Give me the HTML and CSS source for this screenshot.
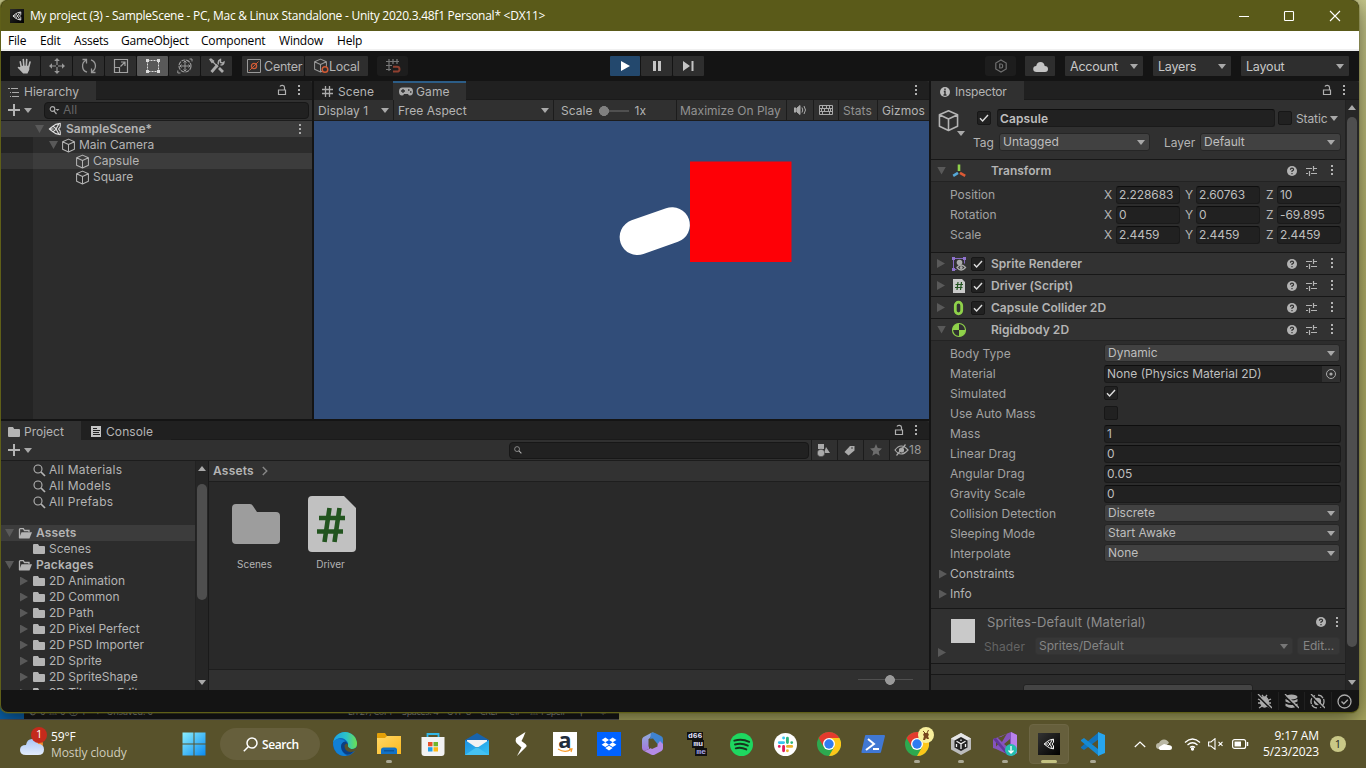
FILE: index.html
```html
<!DOCTYPE html>
<html lang="en">
<head>
<meta charset="utf-8">
<title>My project (3) - SampleScene</title>
<link rel="stylesheet" href="styles.css">
</head>
<body>
<svg class="defs" width="0" height="0" aria-hidden="true">
  <defs>
    <linearGradient id="gEdge" x1="0" y1="0" x2="1" y2="0"><stop offset="0" stop-color="#1ba0e4"/><stop offset=".55" stop-color="#2cc3c8"/><stop offset="1" stop-color="#6de04e"/></linearGradient>
    <linearGradient id="gWin" x1="0" y1="0" x2="1" y2="1"><stop offset="0" stop-color="#8bf0ff"/><stop offset="1" stop-color="#0a8af0"/></linearGradient>
    <linearGradient id="gFold" x1="0" y1="0" x2="1" y2="1"><stop offset="0" stop-color="#ffd867"/><stop offset="1" stop-color="#fdb91e"/></linearGradient>
    <linearGradient id="gCloud" x1="0" y1="0" x2="0" y2="1"><stop offset="0" stop-color="#a9c6f5"/><stop offset="1" stop-color="#e4edfc"/></linearGradient>
    <linearGradient id="gMail" x1="0" y1="0" x2="1" y2="1"><stop offset="0" stop-color="#1c90e0"/><stop offset="1" stop-color="#35c3f5"/></linearGradient>
    <linearGradient id="gM" x1="0" y1="0" x2="0" y2="1"><stop offset="0" stop-color="#8fb0dc"/><stop offset="1" stop-color="#a577dc"/></linearGradient>
    <symbol id="cube" viewBox="0 0 16 16"><path d="M8 1.2 14.3 4v8L8 15 1.7 12V4zM1.7 4 8 7l6.300-3M8 7v8" fill="none" stroke="currentColor" stroke-width="1.100" stroke-linejoin="round"/></symbol>
    <symbol id="unity" viewBox="0 0 16 16"><path d="M14 5.500V1.500L9 2.700 6 4.500 1.500 8 6 11.500l3 1.800 5 1.200v-4M6.500 8H2M9.500 7.500 12.500 2M9.500 8.500l3 5.500M14 5.500 12 8l2 2.500M6 5l3.500 3L6 11" fill="none" stroke="currentColor" stroke-width="1.300" stroke-linejoin="round"/></symbol>
    <symbol id="kebab" viewBox="0 0 4 11"><path d="M1 0h2v2H1zM1 4h2v2H1zM1 8h2v2H1z" fill="currentColor"/></symbol>
    <symbol id="lock" viewBox="0 0 10 12"><path d="M1.500 6h7v4.500h-7zM7.500 6V3.200C7.500.8 3.500.8 3 2.500" fill="none" stroke="currentColor" stroke-width="1.200"/></symbol>
    <symbol id="check" viewBox="0 0 10 10"><path d="M1 5.300 3.600 8 9 2" fill="none" stroke="#dedede" stroke-width="1.400"/></symbol>
    <symbol id="folder" viewBox="0 0 12 10"><path d="M0 1Q0 0 1 0h4l1.200 2H11q1 0 1 1v6q0 1-1 1H1Q0 10 0 9z" fill="currentColor"/></symbol>
    <symbol id="ofolder" viewBox="0 0 14 11"><path d="M1.500 10V1.500q0-.8.8-.8h3L6.500 2.500H11V4" fill="none" stroke="currentColor" stroke-width="1.300"/><path d="M3.500 4.200H14L11.500 10.500H1z" fill="currentColor"/></symbol>
    <symbol id="mag" viewBox="0 0 13 13"><circle cx="5" cy="5" r="4" fill="none" stroke="currentColor" stroke-width="1.100"/><path d="m8 8 4 4" stroke="currentColor" stroke-width="1.700"/></symbol>
    <symbol id="help" viewBox="0 0 10 10"><circle cx="5" cy="5" r="5" fill="#b3b3b3"/><path d="M3.400 3.700Q3.500 2.200 5 2.200t1.600 1.400Q6.600 4.600 5 5v1M5 7v1.200" fill="none" stroke="#303030" stroke-width="1.200"/></symbol>
    <symbol id="preset" viewBox="0 0 11 10"><path d="M0 2.500h6M8 2.500h3M0 7.500h2M5 7.500h6M7.500 0v5M3.500 5v5" fill="none" stroke="currentColor" stroke-width="1.200"/></symbol>
    <symbol id="chrome" viewBox="0 0 24 24"><circle cx="12" cy="12" r="12" fill="#2da94f"/><path d="M1.600 6A12 12 0 0 1 22.400 6H12L6.800 15z" fill="#e33b2e"/><path d="M22.400 6A12 12 0 0 1 12 24l5.200-9L12 6z" fill="#fdc71a"/><circle cx="12" cy="12" r="6" fill="#fff"/><circle cx="12" cy="12" r="4.700" fill="#2f7cf0"/></symbol>
  </defs>
</svg>

<div class="code-strip">
  <span class="remote">&gt;&lt;</span><span class="cs a">⊘ 0 ⚠ 0 ⓘ 1</span><span class="cs b">✦ &nbsp;Unsaved: 0</span>
  <span class="cs c">Ln 27, Col 1</span><span class="cs d">Spaces: 4</span><span class="cs e">UTF-8</span><span class="cs crlf">CRLF</span><span class="cs g">C#</span><span class="cs h">⚠ 1 Spell</span><span class="cs i">⚲</span><span class="cs j">♤</span>
</div>

<div class="window">
  <header class="titlebar">
    <span class="app"><svg width="10" height="10"><use href="#unity"/></svg></span>
    <span class="title">My project (3) - SampleScene - PC, Mac &amp; Linux Standalone - Unity 2020.3.48f1 Personal* &lt;DX11&gt;</span>
    <svg class="winctl" width="102" height="12" viewBox="0 0 102 12" fill="none" stroke="#fff" stroke-width="1.100"><path d="M0 6.500h10M91 1l10 10M101 1 91 11"/><rect x="45.500" y="1.500" width="9" height="9" rx=".8"/></svg>
  </header>
  <nav class="menu"><span class="m1">File</span><span class="m2">Edit</span><span class="m3">Assets</span><span class="m4">GameObject</span><span class="m5">Component</span><span class="m6">Window</span><span>Help</span></nav>

  <div class="toolbar">
    <div class="tools">
      <span class="tb first"><svg width="16" height="16" viewBox="0 0 16 16"><path d="M4.200 8.500 3.300 3.800M6.800 8 6.300 1.500M9.300 8l.4-6.500M11.700 9l1.300-5M4.500 8.500h7v3q-.8 2-1.500 3.200H6.500L1.500 9.500" fill="#b8b8b8" stroke="#b8b8b8" stroke-width="1.600" stroke-linecap="round"/></svg></span>
      <span class="tb"><svg width="16" height="16" viewBox="0 0 16 16" fill="#999"><path d="M8 0l2.800 3H5.200zM8 16l2.800-3H5.200zM0 8l3-2.800v5.600zM16 8l-3-2.800v5.600z"/><path d="M8 3v10M3 8h10" stroke="#999" stroke-width="1.200" stroke-dasharray="4 2"/></svg></span>
      <span class="tb"><svg width="16" height="16" viewBox="0 0 16 16" fill="none" stroke="#999" stroke-width="1.300"><path d="M6 14.200A6.500 6.500 0 0 1 5 2.300M10 1.800a6.500 6.500 0 0 1 1 11.900M1.500 1.500H5.500v4M14.500 14.500h-4v-4"/></svg></span>
      <span class="tb"><svg width="16" height="16" viewBox="0 0 16 16" fill="none" stroke="#a2a2a2" stroke-width="1.200"><path d="M1.500 1.500h13v13h-13zM1.500 9.500h5v5M7.500 8.500 12 4M8 4h4v4"/></svg></span>
      <span class="tb on"><svg width="16" height="16" viewBox="0 0 16 16"><path d="M2.500 2.500h11v11h-11z" fill="none" stroke="#ddd" stroke-dasharray="2 1"/><path d="M1 1h3v3H1zM12 1h3v3h-3zM1 12h3v3H1zM12 12h3v3h-3z" fill="#ddd"/></svg></span>
      <span class="tb"><svg width="16" height="16" viewBox="0 0 16 16" fill="none" stroke="#999"><circle cx="8" cy="8" r="6" stroke-width="1.200" stroke-dasharray="4 .8"/><path d="M8 3v10M3 8h10M6.500 4.500 8 3l1.500 1.500M6.500 11.500 8 13l1.500-1.500M4.500 6.500 3 8l1.500 1.500M11.500 6.500 13 8l-1.500 1.500M12.500 1H15v2.500M.8 12.500V15H3.500"/></svg></span>
      <span class="tb"><svg width="16" height="16" viewBox="0 0 16 16" fill="none" stroke="#aaa"><path d="m2.500 14 6-7M10 10l4 4" stroke-width="2.800"/><path d="m3 3 6 6" stroke-width="1.200"/><path d="M9.500 6.500Q8.300 3 11.500 1.500v3l2 .5 1.500-1Q15 7 11.500 7M1 1.500 2 1l2.500 2-1.500 1.500z" stroke-width="1.400"/></svg></span>
    </div>
    <div class="tools pivot">
      <span class="tb w62"><svg width="14" height="14" viewBox="0 0 14 14" fill="none" stroke="#999"><path d="M.5.500h13v13H.5z"/><path d="m2.500 11.500 9-9" stroke="#d05a35"/><circle cx="7" cy="7" r="2.600" stroke="#d05a35" stroke-width="1.300"/></svg><span>Center</span></span>
      <span class="tb w63"><svg width="16" height="16" viewBox="0 0 16 16"><use href="#cube" width="15" height="15" color="#999"/><circle cx="12" cy="11.500" r="2.800" fill="#2e2e2e" stroke="#d05a35" stroke-width="1.500"/></svg><span>Local</span></span>
    </div>
    <span class="tb snap"><svg width="16" height="16" viewBox="0 0 16 16" fill="none" stroke="#777" stroke-width="1.200"><path d="M4 1v12M8 1v5M12 1v5M1 3.500h13M1 7.500h6M1 11.500h5"/><path d="M8 8.800h4q2.500 0 2.500 2.400T12 13.600H8" stroke="#8f4030" stroke-width="2"/></svg></span>
    <div class="play">
      <span class="tb blue"><svg width="9" height="10"><path d="M0 0 9 5 0 10z" fill="#fff"/></svg></span>
      <span class="tb"><svg width="8" height="10"><path d="M0 0h3v10H0zM5 0h3v10H5z" fill="#c4c4c4"/></svg></span>
      <span class="tb"><svg width="11" height="10"><path d="M0 0 7 5 0 10zM8.500 0h2v10h-2z" fill="#c4c4c4"/></svg></span>
    </div>
    <span class="tb collab"><svg width="14" height="14" viewBox="0 0 14 14" fill="none" stroke="#707070" stroke-width="1.200"><path d="m7 1 5.200 3v6L7 13l-5.200-3V4z"/><path d="M5.700 5h1.500q1.500 0 1.500 2T7.200 9H5.700z"/></svg></span>
    <span class="tb cloud"><svg width="15" height="11" viewBox="0 0 15 11"><path d="M3.500 11Q.2 11 .2 8t3-3Q4 1 7.500 1t4.200 4Q15 5 15 8t-3 3z" fill="#c4c4c4"/></svg></span>
    <span class="tb dd acc">Account<i class="dn"></i></span>
    <span class="tb dd lay">Layers<i class="dn"></i></span>
    <span class="tb dd lyt">Layout<i class="dn"></i></span>
  </div>

  <main class="docks">
    <div class="leftcol">
      <div class="upper">
        <section class="panel hierarchy">
          <div class="tabs">
            <span class="tab t-h"><svg width="11" height="10" viewBox="0 0 11 10" stroke="#aaa"><path d="M0 1.500h2M3 1.500h7M2 5.500h1M4 5.500h7M2 9.500h1M4 9.500h7"/></svg>Hierarchy</span>
            <span class="tabicons"><svg width="10" height="12"><use href="#lock"/></svg><svg width="4" height="11"><use href="#kebab"/></svg></span>
          </div>
          <div class="bar"><span class="plus"></span><i class="dn"></i><span class="search"><svg width="11" height="9" viewBox="0 0 11 9" fill="none" stroke="#aaa" stroke-width="1.200"><circle cx="3.500" cy="3" r="2.300"/><path d="m5 5 2.500 3"/><path d="M6.500 3h4l-2 2z" fill="#aaa" stroke="none"/></svg><em>All</em></span></div>
          <div class="tree">
            <div class="row scene"><i class="tri"></i><svg width="14" height="14"><use href="#unity"/></svg><b>SampleScene*</b><svg class="k" width="4" height="11"><use href="#kebab"/></svg></div>
            <div class="row r1"><i class="tri"></i><svg width="15" height="15"><use href="#cube"/></svg>Main Camera</div>
            <div class="row r2 sel"><svg width="15" height="15"><use href="#cube"/></svg>Capsule</div>
            <div class="row r2"><svg width="15" height="15"><use href="#cube"/></svg>Square</div>
          </div>
        </section>
        <section class="panel game">
          <div class="tabs">
            <span class="tab t-s"><svg width="11" height="11" viewBox="0 0 11 11" stroke="#aaa" stroke-width="1.300"><path d="M3.500 0v11M7.500 0v11M0 3.500h11M0 7.500h11"/></svg>Scene</span>
            <span class="tab t-g"><svg width="14" height="9" viewBox="0 0 14 9"><path d="M3.500.5h7Q14 .5 14 4.500t-3 4Q9.500 8.500 9 7H5Q4.500 8.500 3 8.500q-3 0-3-4t3.500-4z" fill="#aaa"/><path d="M2 4h4M4 2v4M9 3h1.500M11 5h1.500" stroke="#303030" stroke-width="1.300"/></svg>Game</span>
            <span class="tabicons"><svg width="4" height="11"><use href="#kebab"/></svg></span>
          </div>
          <div class="bar gbar">
            <span class="g1">Display 1<i class="dn"></i></span><span class="g2">Free Aspect<i class="dn"></i></span>
            <span class="g3">Scale<span class="slider"></span>1x</span><span class="g4">Maximize On Play</span>
            <span class="g5"><svg width="13" height="10" viewBox="0 0 13 10" fill="none" stroke="#aaa"><path d="M0 3h2v4H0zM3 3l3-2.500v9L3 7z" fill="#aaa"/><path d="M8 2.500q1.500 2.500 0 5M10 1q3 4 0 8"/></svg></span>
            <span class="g6"><svg width="14" height="10" viewBox="0 0 14 10" fill="none" stroke="#aaa"><path d="M.5.500h13v9H.5zM0 3.500h14M0 6.500h14M3.500 0v3M7.500 0v3M10.500 0v3M5.500 3v4M9.500 3v4M2.500 3v4M11.500 3v4M3.500 6v3M10.500 6v3"/></svg></span>
            <span class="g7">Stats</span><span class="g8">Gizmos</span>
          </div>
          <svg class="view" width="615" height="298" viewBox="314 121 615 298"><rect x="690" y="161.500" width="101.500" height="100.500" fill="#fe0006"/><path d="M637.500 237.200 672 225" stroke="#fff" stroke-width="35.700" stroke-linecap="round"/></svg>
        </section>
      </div>
      <section class="panel project">
        <div class="tabs">
          <span class="tab t-p"><svg width="12" height="10"><use href="#folder"/></svg>Project</span>
          <span class="tab t-c"><svg width="10" height="11" viewBox="0 0 10 11"><path d="M0 0h10v11H0z" fill="#c4c4c4"/><path d="M2 2.500h4M2 4.500h7M2 6.500h6M2 8.500h7" stroke="#222"/></svg>Console</span>
          <span class="tabicons"><svg width="10" height="12"><use href="#lock"/></svg><svg width="4" height="11"><use href="#kebab"/></svg></span>
        </div>
        <div class="bar pbar"><span class="plus"></span><i class="dn"></i>
          <span class="search"><svg width="8" height="8"><use href="#mag"/></svg></span>
          <span class="pb"><svg width="13" height="13" viewBox="0 0 13 13" fill="#aaa"><path d="M1 0h6v5H1zM9 3l4 6H7z"/><circle cx="4" cy="9" r="3.800" stroke="#303030" stroke-width=".6"/></svg></span>
          <span class="pb"><svg width="11" height="11" viewBox="0 0 11 11"><path d="M6 1h4.500v4.500L4.500 10.500.5 7z" fill="#aaa"/><circle cx="8" cy="3" r=".8" fill="#303030"/></svg></span>
          <span class="pb"><svg width="12" height="12" viewBox="0 0 12 12"><path d="m6 0 1.700 4.100 4.300.4-3.300 2.900 1 4.300L6 9.400l-3.700 2.300 1-4.300L0 4.500l4.300-.4z" fill="#6c6c6c"/></svg></span>
          <span class="pb eye"><svg width="15" height="12" viewBox="0 0 15 12" fill="none" stroke="#aaa" stroke-width="1.200"><path d="M1 6q6-8 13 0-7 8-13 0zM2.500 11.500l9-11"/><circle cx="7.500" cy="6" r="2" fill="#aaa"/></svg>18</span>
        </div>
        <div class="pbody">
          <div class="ptree">
            <div class="row f mg"><svg width="13" height="13"><use href="#mag"/></svg>All Materials</div>
            <div class="row f mg"><svg width="13" height="13"><use href="#mag"/></svg>All Models</div>
            <div class="row f mg"><svg width="13" height="13"><use href="#mag"/></svg>All Prefabs</div>
            <div class="row root sel gap"><i class="tri"></i><svg width="14" height="11"><use href="#ofolder"/></svg><b>Assets</b></div>
            <div class="row f"><svg width="12" height="10"><use href="#folder"/></svg>Scenes</div>
            <div class="row root"><i class="tri"></i><svg width="14" height="11"><use href="#ofolder"/></svg><b>Packages</b></div>
            <div class="row p"><i class="rt"></i><svg width="12" height="10"><use href="#folder"/></svg>2D Animation</div>
            <div class="row p"><i class="rt"></i><svg width="12" height="10"><use href="#folder"/></svg>2D Common</div>
            <div class="row p"><i class="rt"></i><svg width="12" height="10"><use href="#folder"/></svg>2D Path</div>
            <div class="row p"><i class="rt"></i><svg width="12" height="10"><use href="#folder"/></svg>2D Pixel Perfect</div>
            <div class="row p"><i class="rt"></i><svg width="12" height="10"><use href="#folder"/></svg>2D PSD Importer</div>
            <div class="row p"><i class="rt"></i><svg width="12" height="10"><use href="#folder"/></svg>2D Sprite</div>
            <div class="row p"><i class="rt"></i><svg width="12" height="10"><use href="#folder"/></svg>2D SpriteShape</div>
            <div class="row p"><i class="rt"></i><svg width="12" height="10"><use href="#folder"/></svg>2D Tilemap Editor</div>
          </div>
          <div class="scroll ps"><i class="up"></i><span class="thumb"></span><i class="dn"></i></div>
          <div class="files">
            <div class="crumb"><b>Assets</b><svg width="6" height="10" viewBox="0 0 6 10"><path d="m.8 1 4 4-4 4" fill="none" stroke="#888" stroke-width="1.400"/></svg></div>
            <div class="grid">
              <div class="file"><svg width="48" height="56" viewBox="0 0 48 56"><path d="M0 12q0-4 4-4h14q2 0 3 2l4 6h19q4 0 4 4v24q0 4-4 4H4q-4 0-4-4z" fill="#9d9d9d"/></svg><span>Scenes</span></div>
              <div class="file"><svg width="48" height="56" viewBox="0 0 48 56"><path d="M0 4q0-4 4-4h32l12 12v40q0 4-4 4H4q-4 0-4-4z" fill="#c1c1c1"/><path d="m21.500 12-5 34M31.500 12l-5 34M11 22h26M9 35.500h26" stroke="#22541f" stroke-width="4.600"/></svg><span>Driver</span></div>
            </div>
            <div class="ffoot"><span class="zoom"></span></div>
          </div>
        </div>
      </section>
    </div>

    <section class="panel inspector">
      <div class="tabs">
        <span class="tab t-i"><svg width="10" height="10" viewBox="0 0 10 10"><circle cx="5" cy="5" r="5" fill="#bbb"/><path d="M5 1.500v1.700M3.800 4.500H5V8M3.500 8h3" fill="none" stroke="#303030" stroke-width="1.400"/></svg>Inspector</span>
        <span class="tabicons"><svg width="10" height="12"><use href="#lock"/></svg><svg width="4" height="11"><use href="#kebab"/></svg></span>
      </div>
      <div class="ibody">
        <div class="props">
          <div class="objhead">
            <span class="bigcube"><svg width="23" height="23"><use href="#cube"/></svg><i class="dn"></i></span>
            <div class="objrows">
              <div class="o1"><span class="cb"><svg width="10" height="10"><use href="#check"/></svg></span><span class="input"><b>Capsule</b></span><span class="cb"></span><span class="st">Static</span><i class="dn"></i></div>
              <div class="o2"><span class="lt">Tag</span><span class="drop d1">Untagged<i class="dn"></i></span><span class="ll">Layer</span><span class="drop d2">Default<i class="dn"></i></span></div>
            </div>
          </div>
          <div class="comp open"><i class="tri"></i><svg width="16" height="16" viewBox="0 0 16 16" fill="none" stroke-width="2.600"><path d="M8 1.500v6.500" stroke="#8fd14a"/><path d="m7 9.800-4.800 3" stroke="#56a8d8"/><path d="m9 9.800 5.200 3" stroke="#dd5a35"/></svg><span class="nocb"></span><b>Transform</b><svg width="10" height="10"><use href="#help"/></svg><svg width="11" height="10"><use href="#preset"/></svg><svg width="4" height="11"><use href="#kebab"/></svg></div>
          <div class="fields tf">
            <div class="fr"><span>Position</span><em>X</em><span class="input">2.228683</span><em>Y</em><span class="input">2.60763</span><em>Z</em><span class="input">10</span></div>
            <div class="fr"><span>Rotation</span><em>X</em><span class="input">0</span><em>Y</em><span class="input">0</span><em>Z</em><span class="input">-69.895</span></div>
            <div class="fr"><span>Scale</span><em>X</em><span class="input">2.4459</span><em>Y</em><span class="input">2.4459</span><em>Z</em><span class="input">2.4459</span></div>
          </div>
          <div class="comp"><i class="rt"></i><svg width="16" height="16" viewBox="0 0 16 16" fill="none"><path d="M2.500 2.500v11M2.500 2.500h11v5M2.500 13.500h3" stroke="#8468c0"/><path d="M1 1h3v3H1zM12 1h3v3h-3zM1 12h3v3H1z" fill="#8f73cc"/><circle cx="8.500" cy="6.500" r="2.800" fill="#aaa"/><path d="M6 11.500q4-5 8.500 0-4.500 5-8.500 0z" stroke="#aaa" stroke-width="1.300" fill="#303030"/><circle cx="10.200" cy="11.500" r="1.500" fill="#aaa"/></svg><span class="cb"><svg width="10" height="10"><use href="#check"/></svg></span><b>Sprite Renderer</b><svg width="10" height="10"><use href="#help"/></svg><svg width="11" height="10"><use href="#preset"/></svg><svg width="4" height="11"><use href="#kebab"/></svg></div>
          <div class="comp"><i class="rt"></i><svg width="16" height="16" viewBox="0 0 16 16"><path d="M2 1h9l3 3v11H2z" fill="#c9c9c9"/><path d="m7 4-1 8M10.500 4l-1 8M4.500 6.500h7.500M4 9.500h7.500" stroke="#22541f" stroke-width="1.200"/></svg><span class="cb"><svg width="10" height="10"><use href="#check"/></svg></span><b>Driver (Script)</b><svg width="10" height="10"><use href="#help"/></svg><svg width="11" height="10"><use href="#preset"/></svg><svg width="4" height="11"><use href="#kebab"/></svg></div>
          <div class="comp"><i class="rt"></i><svg width="16" height="16" viewBox="0 0 16 16"><rect x="4.300" y="2.200" width="6.400" height="11.600" rx="3.200" fill="none" stroke="#8fd14a" stroke-width="2.800"/></svg><span class="cb"><svg width="10" height="10"><use href="#check"/></svg></span><b>Capsule Collider 2D</b><svg width="10" height="10"><use href="#help"/></svg><svg width="11" height="10"><use href="#preset"/></svg><svg width="4" height="11"><use href="#kebab"/></svg></div>
          <div class="comp open"><i class="tri"></i><svg width="16" height="16" viewBox="0 0 16 16"><circle cx="8" cy="8" r="6.500" fill="#303030" stroke="#8fd14a" stroke-width="1.200"/><path d="M8 8V1.500A6.500 6.500 0 0 0 1.500 8zM8 8v6.500A6.500 6.500 0 0 0 14.500 8z" fill="#8fd14a"/></svg><span class="nocb"></span><b>Rigidbody 2D</b><svg width="10" height="10"><use href="#help"/></svg><svg width="11" height="10"><use href="#preset"/></svg><svg width="4" height="11"><use href="#kebab"/></svg></div>
          <div class="fields rb">
            <div class="fr"><span>Body Type</span><span class="drop">Dynamic<i class="dn"></i></span></div>
            <div class="fr"><span>Material</span><span class="input obj">None (Physics Material 2D)<svg width="18" height="16" viewBox="0 0 18 16"><path d="M0 0h18v16H0z" fill="#303030"/><circle cx="9" cy="8" r="4.500" fill="none" stroke="#aaa"/><circle cx="9" cy="8" r="1.600" fill="#aaa"/></svg></span></div>
            <div class="fr"><span>Simulated</span><span class="cb"><svg width="10" height="10"><use href="#check"/></svg></span></div>
            <div class="fr"><span>Use Auto Mass</span><span class="cb"></span></div>
            <div class="fr"><span>Mass</span><span class="input">1</span></div>
            <div class="fr"><span>Linear Drag</span><span class="input">0</span></div>
            <div class="fr"><span>Angular Drag</span><span class="input">0.05</span></div>
            <div class="fr"><span>Gravity Scale</span><span class="input">0</span></div>
            <div class="fr"><span>Collision Detection</span><span class="drop">Discrete<i class="dn"></i></span></div>
            <div class="fr"><span>Sleeping Mode</span><span class="drop">Start Awake<i class="dn"></i></span></div>
            <div class="fr"><span>Interpolate</span><span class="drop">None<i class="dn"></i></span></div>
            <div class="fr fold"><i class="rt"></i>Constraints</div>
            <div class="fr fold"><i class="rt"></i>Info</div>
          </div>
          <div class="material">
            <span class="msw"><i class="rt"></i><span class="swatch"></span></span>
            <div class="mr">
              <div class="mt"><span>Sprites-Default (Material)</span><svg width="10" height="10"><use href="#help"/></svg><svg width="4" height="11"><use href="#kebab"/></svg></div>
              <div class="ms"><span>Shader</span><span class="drop dim">Sprites/Default<i class="dn"></i></span><span class="drop dim ed">Edit...</span></div>
            </div>
          </div>
          <div class="thin"></div>
          <div class="addwrap"><span class="addbtn"></span></div>
        </div>
        <div class="scroll is"><i class="up"></i><span class="thumb"></span><i class="dn"></i></div>
      </div>
    </section>
  </main>
  <footer class="status">
    <span><svg width="15" height="15" viewBox="0 0 15 15" fill="none" stroke="#aaa" stroke-width="1.300"><ellipse cx="7.500" cy="8" rx="3.800" ry="5" fill="#aaa"/><path d="M1 5l3 1.500M1 9h3M2 14l3-2M14 5l-3 1.500M14 9h-3M13 14l-3-2M5 1l1.500 2M10 1 8.500 3"/><path d="m0 1 14 14" stroke="#141414" stroke-width="1.600"/><path d="m1 0 14 14" /></svg></span>
    <span><svg width="15" height="15" viewBox="0 0 15 15" fill="#aaa"><ellipse cx="7.500" cy="3" rx="6" ry="2.500"/><path d="M1.500 5q6 3 12 0v2.500q-6 3-12 0zM1.500 9.500q6 3 12 0V12q-6 4-12 0z"/><path d="m0 1 14 14" stroke="#141414" stroke-width="1.600"/><path d="m1 0 14 14" stroke="#aaa" stroke-width="1.300"/></svg></span>
    <span><svg width="15" height="15" viewBox="0 0 15 15" fill="none" stroke="#aaa" stroke-width="1.300"><path d="M5 1.500A6.500 6.500 0 0 0 1.500 10M10 13.500A6.500 6.500 0 0 0 13.500 5M8 1.200q3.500 0 5 3M7 13.800q-4 0-5-3"/><circle cx="7.500" cy="7.500" r="3" fill="#aaa"/><path d="m0 1 14 14" stroke="#141414" stroke-width="1.600"/><path d="m1 0 14 14"/></svg></span>
    <span><svg width="15" height="15" viewBox="0 0 15 15" fill="none" stroke="#aaa" stroke-width="1.300"><circle cx="7.500" cy="7.500" r="6.500"/><path d="m4.500 7.500 2.300 2.300 4-4"/></svg></span>
  </footer>
</div>

<div class="taskbar">
  <div class="weather"><svg width="28" height="30" viewBox="0 0 28 30"><circle cx="18" cy="17" r="5" fill="#f08c30"/><path d="M6 28q-6 0-6-5t6-5q1-6 6-6t6 5q6 0 6 5.500T18 28z" fill="url(#gCloud)"/><circle cx="19" cy="8" r="8" fill="#c42b1c"/></svg><em>1</em><div><span>59°F</span><span class="soft">Mostly cloudy</span></div></div>
  <span class="ic start"><svg width="24" height="24" viewBox="0 0 24 24"><path d="M.5.500h11v11H.5zM12.500.5h11v11h-11zM.5 12.500h11v11H.5zM12.500 12.500h11v11h-11z" fill="url(#gWin)"/></svg></span>
  <span class="pill"><svg width="15" height="15" viewBox="0 0 15 15" fill="none" stroke="#fff" stroke-width="1.500"><circle cx="9" cy="6" r="5"/><path d="M5.500 9.500.8 14.200"/></svg>Search</span>
  <span class="ic"><svg width="24" height="24" viewBox="0 0 24 24"><circle cx="12" cy="12" r="12" fill="#0b66bd"/><path d="M0 12A12 12 0 0 1 24 12q0 5-5.500 5-4 0-4-2.500 1.500-2 0-4.500Q10 4 4 7 0 9 0 12z" fill="url(#gEdge)"/><path d="M0 12q1-5 6.500-5 4 0 6 2.500Q8 10 8 15q0 5 6 9Q2 25 0 12z" fill="#1280d5"/><path d="M8 15q0-5 4.500-5.500 3 2 2 4.500 0 3 4 3.500 2.500 0 4-1-3.500 6.500-8.500 6-5-1.500-6-7.500z" fill="#0c3f83"/><path d="M11.500 13.500q1.500-3 3.500-1.500-1.500 3 3.500 5.300 3 0 5.500-2.300v2.500q-3 2.500-6.500 2.500-6 0-6-6.500z" fill="#58522b"/></svg></span>
  <span class="ic run"><svg width="24" height="24" viewBox="0 0 24 24"><path d="M0 2q0-1 1-1h7l2 3h13q1 0 1 1v4H0z" fill="#e3a008"/><path d="M0 6h8l2-2h14v18H0z" fill="url(#gFold)"/><path d="M4 22v-4q0-2.500 2.500-2.500h11Q20 15.500 20 18v4z" fill="#1272c5"/><path d="M7 18h10v1.500H7z" fill="#0c5598"/></svg></span>
  <span class="ic"><svg width="24" height="24" viewBox="0 0 24 24"><path d="M6.500 6V2h11v4" fill="none" stroke="#32b7e8" stroke-width="1.800"/><path d="M.5 5h23v16q0 3-3 3h-17q-3 0-3-3z" fill="#f2f2f2"/><path d="M7 10h4.500v4.300H7z" fill="#e8502a"/><path d="M12.500 10H17v4.300h-4.500z" fill="#6fb52c"/><path d="M7 15.200h4.500v4.300H7z" fill="#1f9fe8"/><path d="M12.500 15.200H17v4.300h-4.500z" fill="#fcb913"/></svg></span>
  <span class="ic"><svg width="24" height="24" viewBox="0 0 24 24"><path d="M0 8 12 1l12 7v4H0z" fill="#1763ad"/><path d="M2 8h20v7H2z" fill="#f2f2f2"/><path d="m0 8 12 8 12-8v15H0z" fill="url(#gMail)"/><path d="m12 15 12 8H0z" fill="#45c2f2"/></svg></span>
  <span class="ic"><svg width="12" height="24" viewBox="0 0 12 24"><path d="M10.500 0 1 6Q0 9 1.500 11L6.500 15.500 2 24 11.500 14.500Q12 13 10.500 12L6.500 9 8.500 5z" fill="#fff"/></svg></span>
  <span class="ic"><span class="amz"><b>a</b><svg width="16" height="5" viewBox="0 0 16 5"><path d="M1 1q7 4.500 13 .5M12 .8h3L14 4" fill="none" stroke="#f79a28" stroke-width="1.200"/></svg></span></span>
  <span class="ic"><svg width="24" height="24" viewBox="0 0 24 24"><path d="M0 0h24v24H0z" fill="#0062ff"/><path d="m8.300 5.500 3.700 2.400-3.700 2.400 3.700 2.400-3.700 2.400-3.700-2.400 3.700-2.400-3.700-2.400zM15.700 5.500l3.700 2.400-3.700 2.400 3.700 2.400-3.700 2.400-3.700-2.400 3.700-2.400L12 7.900zM8.300 16l3.700-2.300 3.700 2.300-3.700 2.400z" fill="#fff"/></svg></span>
  <span class="ic"><svg width="22" height="24" viewBox="0 0 22 24"><path d="M0 8q0-2 1.500-3L9 1q2-1 3 0L7 7v10l-5 2q-2-1-2-3z" fill="url(#gM)"/><path d="M9 1q2-1 4 0l6 3q2 1 2 3v10l-6-4L8 7z" fill="#3f83cf"/><path d="M21 12v4q0 2-1.500 3L13 22.500q-2 1-4 0L2 19q3-1 5-2l8-4 3-4z" fill="#b48be6"/><path d="m6.500 7 4.500-.5 4.500 5.500v2.500L10 17l-3.500-2.500z" fill="#58522b"/></svg></span>
  <span class="ic"><span class="dos"><b>d66</b><b>mu</b><b>me</b></span></span>
  <span class="ic"><svg width="23" height="23" viewBox="0 0 24 24"><circle cx="12" cy="12" r="12" fill="#1ed760"/><path d="M4.500 8q8-2.500 15.500 1.200M5.200 12q7-2 13.400 1.200M6 16q5.500-1.500 11 1.200" fill="none" stroke="#17351e" stroke-width="2" stroke-linecap="round"/></svg></span>
  <span class="ic"><svg width="23" height="23" viewBox="0 0 24 24"><circle cx="12" cy="12" r="12" fill="#fff"/><g fill="none" stroke-width="3" stroke-linecap="round"><path d="M10 5.200v0M5.500 10H10" stroke="#36c5f0"/><path d="M14 5.500V10M18.500 10v0" stroke="#2eb67d"/><path d="M14 14h4.500M14 18.500v0" stroke="#ecb22e"/><path d="M10 14v4.500M5.500 14v0" stroke="#e01e5a"/></g></svg></span>
  <span class="ic"><svg width="24" height="24"><use href="#chrome"/></svg></span>
  <span class="ic"><svg width="24" height="20" viewBox="0 0 24 20"><path d="M5 1h18q1 0 1 1l-4 16q0 1-1.500 1H1.500Q0 19 .5 17.500L4 2q0-1 1-1z" fill="#4078d4"/><path d="m7 5 6 5-8 6M12 15h6" fill="none" stroke="#fff" stroke-width="2"/></svg></span>
  <span class="ic run"><svg width="24" height="24"><use href="#chrome"/></svg><span class="ava"><svg width="8" height="10" viewBox="0 0 8 10"><path d="M2 3h4l1 2-1 1 1 3H5L4 8 3 10H1l1-4-1-1z" fill="#77461f"/><path d="M1 1l2 2M6.500 0 5 3" stroke="#77461f"/></svg></span></span>
  <span class="ic run"><svg width="22" height="24" viewBox="0 0 22 24"><path d="m11 1 10 5.500v11L11 23 1 17.500v-11z" fill="#bcbcbc"/><path d="m11 1 10 5.500-10 5-10-5z" fill="#e5e5e5"/><path d="m11 5 6.500 3.500v7L11 19l-6.500-3.500v-7z" fill="#222"/><path d="m6.500 9.300 4.500 2.500 4.500-2.500M11 12v5M6.500 12v3M15.500 12v3M11 7.500V9" fill="none" stroke="#eee" stroke-width="1.300"/></svg></span>
  <span class="ic run"><svg width="24" height="24" viewBox="0 0 24 24"><path d="m0 7 3-1 15-6 6 3v18l-6 3L3 17l-3-1zm3 2.500v5L5.500 12zM17 7l-6 5 6 5z" fill="#8553bd" fill-rule="evenodd"/><path d="m18 0 6 3v18l-6 3z" fill="#b981ec"/><path d="m0 7 3-1 15 18-4-1z" fill="#61379b"/><path d="M4.500 5.500 9 10l5-8.500L8 5z" fill="#58522b"/><circle cx="18" cy="18" r="6" fill="#23bdae"/><path d="M18 14v7M15.500 18.500 18 21l2.500-2.500" fill="none" stroke="#fff" stroke-width="1.300"/></svg></span>
  <span class="ic run active"><span class="uapp"><svg width="12" height="12"><use href="#unity"/></svg></span></span>
  <span class="ic run"><svg width="24" height="24" viewBox="0 0 24 24"><path d="M18 0v7L3 18l-3-2v-1z" fill="#1173bd"/><path d="m18 24-1-7L3 6 0 8v1z" fill="#168ad3"/><path d="m17 0 7 3v18l-7 3z" fill="#27a5ee"/></svg></span>
  <div class="tray">
    <svg width="12" height="7" viewBox="0 0 12 7"><path d="m.8 6 5.200-5 5.200 5" fill="none" stroke="#fff" stroke-width="1.200"/></svg>
    <svg class="tc" width="16" height="11" viewBox="0 0 16 11"><path d="M3 10Q0 10 0 7t3-3Q4.500.5 8 .5t5 3.500L7 9z" fill="#b9b7a4"/><path d="M4 11Q2 10 3 8l5-3 4 1q4 0 4 2.500T13.500 11z" fill="#fff"/></svg>
    <svg class="tw" width="17" height="13" viewBox="0 0 17 13" fill="none" stroke="#fff" stroke-width="1.300"><path d="M1 4.500q7.500-7 15 0M3.500 7q5-4.500 10 0M6 9.500q2.500-2 5 0"/><circle cx="8.500" cy="11" r="1" fill="#fff"/></svg>
    <svg class="tv" width="16" height="12" viewBox="0 0 16 12" fill="none" stroke="#fff" stroke-width="1.100"><path d="M.6 4H3l4-3.300v10.600L3 8H.6zM10.500 3.800l4 4M14.500 3.800l-4 4"/></svg>
    <svg class="tbt" width="17" height="10" viewBox="0 0 17 10"><rect x=".6" y=".6" width="13" height="8.800" rx="2" fill="none" stroke="#fff" stroke-width="1.200"/><path d="M2.500 2.500h6.500v5H2.500z" fill="#fff"/><path d="M15.500 3v4" stroke="#fff" stroke-width="1.500"/></svg>
  </div>
  <div class="clock"><span>9:17 AM</span><span>5/23/2023</span></div>
  <span class="note">1</span>
</div>
</body>
</html>
```
FILE: styles.css
```css
* { box-sizing: border-box; }
body { margin: 0; width: 1366px; height: 768px; overflow: hidden; position: relative; background: linear-gradient(180deg, #c5c68a 0, #b5b26b 250px, #aaa860 100%); font: 12px/16px Inter, "Liberation Sans", sans-serif; color: #b4b4b4; }
svg { display: block; flex: none; }
.defs { position: absolute; }
b { font-weight: 600; }
em, i { font-style: normal; }
i { flex: none; }
.dn { width: 0; height: 0; border: 4px solid transparent; border-top: 5px solid #a9a9a9; border-bottom: 0; }
.up { width: 0; height: 0; border: 4px solid transparent; border-bottom: 5px solid #a9a9a9; border-top: 0; }
.tri { width: 9px; height: 8px; background: #595959; clip-path: polygon(0 0, 100% 0, 50% 100%); }
.rt { width: 8px; height: 9px; background: #595959; clip-path: polygon(0 0, 100% 50%, 0 100%); }

/* editor window behind the Unity window */
.code-strip { position: absolute; left: 0; top: 700px; width: 619px; height: 20px; background: #181818; border-bottom: 1px solid #555; overflow: hidden; font: 9px/16px "Open Sans", sans-serif; color: #999; }
.remote { position: absolute; inset: 0 auto 0 0; width: 24px; background: #0a62ab; color: #fff; padding: 3px 6px; }
.cs { position: absolute; top: 4px; white-space: nowrap; }
.a { left: 29px; letter-spacing: .5px; } .b { left: 94px; } .c { left: 348px; letter-spacing: -.3px; } .d { left: 402px; letter-spacing: -.3px; } .e { left: 447px; } .crlf { left: 480px; letter-spacing: -.3px; } .g { left: 509px; } .h { left: 530px; letter-spacing: -.4px; } .i { left: 578px; } .j { left: 599px; }

.window { position: absolute; left: 0; top: 0; width: 1359px; height: 713px; border: 1px solid #5f5f18; border-top: 0; border-right-width: 0; border-radius: 8px; overflow: hidden; background: #141414; display: flex; flex-direction: column; box-shadow: 0 0 0 1px #6464204d, 0 6px 22px #0008; }
.titlebar { height: 31px; flex: none; background: #5a5a19; display: flex; align-items: center; color: #fff; padding-left: 9px; font: 12px "Open Sans", sans-serif; }
.app { width: 14px; height: 14px; background: linear-gradient(135deg, #2b2b2b, #000); color: #fff; display: grid; place-items: center; margin-right: 6px; }
.title { width: 520px; white-space: nowrap; letter-spacing: -.26px; }
.winctl { margin-left: auto; margin-right: 18px; }
.menu { height: 20px; flex: none; background: #fff; border-bottom: 2px solid #f0f0f0; color: #000; display: flex; padding-left: 7px; font: 12px/20px "Open Sans", sans-serif; letter-spacing: -.2px; }
.m1 { width: 32px; } .m2 { width: 34px; } .m3 { width: 47px; } .m4 { width: 80px; } .m5 { width: 78px; } .m6 { width: 58px; }

.toolbar { height: 30px; flex: none; display: flex; align-items: center; padding-left: 9px; font-size: 12.500px; }
.tools { display: flex; gap: 1px; }
.tb { width: 31px; height: 20px; background: #2e2e2e; display: flex; align-items: center; justify-content: center; border-radius: 1px; }
.first { width: 30px; }
.on { background: #595959; }
.pivot { margin-left: 10px; letter-spacing: -.25px; }
.pivot .tb > span { padding-top: 1px; }
.w62 { width: 62px; justify-content: flex-start; padding-left: 5px; gap: 3px; }
.w63 { width: 63px; justify-content: flex-start; padding-left: 8px; gap: 0; }
.snap { margin-left: 9px; background: #1d1d1d; border-radius: 3px; }
.play { display: flex; gap: 1px; margin-left: 202px; }
.play .tb:first-child { width: 30px; }
.blue { background: #23486d; }
.collab { margin-left: 281px; background: #1d1d1d; border-radius: 3px; }
.cloud { width: 30px; margin-left: 9px; }
.dd { justify-content: space-between; padding: 1px 5px 0 5px; margin-left: 10px; color: #c8c8c8; letter-spacing: -.2px; }
.acc, .lay { width: 78px; } .lyt { width: 108px; }

.docks { height: 609px; flex: none; display: flex; gap: 2px; }
.leftcol { width: 928px; display: flex; flex-direction: column; gap: 2px; }
.upper { height: 338px; display: flex; gap: 2px; }
.panel { background: #2c2c2c; display: flex; flex-direction: column; overflow: hidden; }
.tabs { height: 19px; flex: none; background: #202020; display: flex; font-size: 12px; line-height: 20px; border-bottom: 1px solid #1a1a1a; border-radius: 3px 3px 0 0; }
.tab { display: flex; align-items: center; gap: 5px; height: 19px; background: #303030; padding: 2px 0 0 7px; }
.t-h { width: 95px; } .t-s { width: 79px; background: #202020; padding-left: 8px; } .t-g { width: 73px; border-top: 2px solid #2c5d87; padding-top: 0; padding-left: 6px; gap: 3px; } .t-p { width: 80px; gap: 4px; } .t-c { width: 90px; background: #202020; padding-left: 10px; } .t-i { width: 93px; padding-left: 9px; }
.t-s, .t-g, .t-c { letter-spacing: .1px; }
.t-i { letter-spacing: -.2px; }
.tabicons { margin-left: auto; display: flex; gap: 10px; align-items: center; padding-right: 11px; color: #b0b0b0; }
.inspector .tabicons { padding-right: 13px; }
.bar { height: 21px; flex: none; background: #303030; border-bottom: 1px solid #1c1c1c; display: flex; align-items: center; }
.plus { width: 12px; height: 12px; margin: 0 4px 0 7px; background: linear-gradient(#b4b4b4, #b4b4b4) center/12px 2px no-repeat, linear-gradient(#b4b4b4, #b4b4b4) center/2px 12px no-repeat; }
.search { height: 17px; background: #212121; border: 1px solid #171717; border-radius: 4px; display: flex; align-items: center; padding-left: 4px; gap: 4px; }
.hierarchy { width: 311px; }
.hierarchy .search { margin-left: 12px; width: 265px; color: #666; }
.search em { margin-left: -1px; }
.tree { flex: 1; background: linear-gradient(90deg, #242424 32px, #2c2c2c 32px); }
.row { height: 16px; display: flex; align-items: center; gap: 3px; font-size: 12px; white-space: nowrap; }
.scene { background: #3c3c3c; padding-left: 34px; gap: 4px; }
.scene svg { color: #ddd; }
.scene .k { margin: 0 10px 0 auto; color: #aaa; }
.r1 { padding-left: 48px; } .r2 { padding-left: 74px; }
.tree .sel { background: linear-gradient(90deg, #343434 32px, #3c3c3c 32px); }
.game { width: 615px; }
.gbar > span { height: 20px; border-right: 1px solid #1c1c1c; display: flex; align-items: center; padding: 1px 0 0 4px; white-space: nowrap; font-size: 12px; letter-spacing: .05px; }
.gbar .dn { margin-left: auto; margin-right: 4px; }
.gbar .g1 { width: 80px; } .gbar .g2 { width: 160px; }
.gbar .g3 { width: 123px; padding-left: 7px; } .gbar .g4 { width: 110px; padding-left: 3px; color: #929292; letter-spacing: 0; } .gbar .g5 { width: 27px; padding: 0 0 0 7px; } .gbar .g6 { width: 25px; padding: 0 0 0 5px; } .gbar .g7 { width: 39px; color: #929292; } .gbar .g8 { width: 51px; border: 0; padding-left: 4px; }
.slider { width: 30px; height: 10px; margin: 0 6px 0 6px; background: radial-gradient(circle at 5px 5px, #808080 4.700px, transparent 5.200px), linear-gradient(#505050, #505050) 0 4px/30px 2px no-repeat; }
.view { background: #314d79; }
.project { height: 269px; }
.pbar .search { margin-left: 477px; width: 300px; margin-right: 2px; }
.pb { width: 26px; height: 20px; border-left: 1px solid #1c1c1c; display: flex; align-items: center; justify-content: center; padding-right: 2px; }
.eye { width: 39px; justify-content: flex-start; padding-left: 4px; color: #999; }
.pbody { height: 229px; display: flex; }
.ptree { width: 194px; overflow: hidden; padding-top: 1px; }
.f { padding-left: 32px; gap: 4px; }
.mg { gap: 3px; letter-spacing: .3px; }
.ptree .sel { background: #3c3c3c; }
.gap { margin-top: 15px; }
.root { padding-left: 4px; gap: 4px; }
.root b { letter-spacing: .15px; }
.p { padding-left: 19px; gap: 4px; }
.p .rt { margin-right: 1px; }
.scroll { display: flex; flex-direction: column; align-items: center; background: #262626; border-left: 1px solid #222; }
.thumb { width: 10px; border-radius: 5px; background: #4e4e4e; }
.ps { width: 14px; border-right: 1px solid #1a1a1a; padding: 5px 0 5px; }
.ps .thumb { height: 116px; margin-top: 13px; }
.ps .dn, .is .dn { margin-top: auto; }
.files { width: 720px; display: flex; flex-direction: column; background: #292929; }
.crumb { height: 21px; flex: none; background: #323232; border-bottom: 1px solid #1e1e1e; display: flex; align-items: center; padding-left: 4px; gap: 8px; font-size: 12px; letter-spacing: .2px; }
.grid { flex: 1; display: flex; padding: 14px 0 0 23px; gap: 28px; }
.file { width: 48px; display: flex; flex-direction: column; align-items: center; gap: 4px; font-size: 10px; }
.file span { margin-right: 3px; }
.ffoot { height: 21px; border-top: 1px solid #1e1e1e; background: #303030; display: flex; align-items: center; justify-content: flex-end; padding-right: 16px; }
.zoom { width: 55px; height: 10px; background: radial-gradient(circle at 32px 5px, #999 4.500px, transparent 5.200px), linear-gradient(#505050, #505050) 0 4px/55px 1px no-repeat; }

.inspector { width: 428px; }
.ibody { display: flex; height: 590px; }
.props { width: 414px; overflow: hidden; font-size: 12px; }
.is { width: 14px; padding: 5px 1px 5px 0; }
.is .thumb { height: 530px; margin-top: 7px; }
.objhead { height: 59px; display: flex; background: #303030; }
.bigcube { width: 28px; height: 38px; margin: 9px 0 0 6px; display: flex; flex-direction: column; align-items: flex-end; }
.bigcube svg { margin-right: 5px; }
.bigcube .dn { margin-top: -1px; }
.objrows { margin: 9px 0 0 11px; flex: 1; }
.o1, .o2 { display: flex; align-items: center; height: 18px; }
.o2 { margin-top: 6px; }
.o1 > *, .o2 > * { flex: none; }
.cb { width: 14px; height: 14px; background: #212121; border: 1px solid #171717; border-radius: 2px; display: grid; place-items: center; flex: none; }
.input { height: 18px; background: #212121; border: 1px solid #1a1a1a; border-top-color: #0e0e0e; border-radius: 3px; display: flex; align-items: center; padding-left: 2px; white-space: nowrap; color: #bebebe; }
.o1 .cb:first-child { margin: 0 6px 0 1px; }
.o1 .input { width: 278px; margin-right: 3px; padding-top: 1px; letter-spacing: .1px; }
.st { margin: 0 2px 0 4px; padding-top: 1px; letter-spacing: -.1px; }
.o2 .lt { width: 24px; margin-left: -3px; }
.o2 .lt, .o2 .ll { padding-top: 1px; }
.drop { height: 18px; background: #414141; border: 1px solid #262626; border-radius: 3px; display: flex; align-items: center; padding: 0 4px 1px 3px; line-height: 14px; color: #bebebe; }
.drop .dn { margin-left: auto; margin-top: 2px; }
.o2 .d1 { width: 151px; margin: 0 14px 0 2px; } .o2 .ll { width: 36px; } .o2 .d2 { width: 141px; padding-right: 5px; }
.comp { height: 22px; border-top: 1px solid #171717; background: #323232; display: flex; align-items: center; padding-left: 6px; }
.comp > svg:nth-child(2) { margin-left: 5px; }
.comp .rt { margin-right: 1px; }
.comp .cb, .nocb { margin: 0 6px 0 4px; }
.nocb { width: 14px; }
.comp > b { width: 295px; letter-spacing: .03px; }
.comp > b + svg { margin-left: 1px; }
.comp > b ~ svg + svg { margin-left: 9px; }
.comp > b ~ svg + svg + svg { margin-left: 13px; }
.open { border-bottom: 1px solid #232323; height: 23px; margin-bottom: -1px; }
.fields { padding: 4px 4px 0 19px; }
.tf { height: 71px; } .rb { height: 268px; }
.fr { height: 20px; display: flex; align-items: center; }
.fr > * { flex: none; }
.fr > span:first-child { width: 154px; color: #a2a2a2; }
.rb .fr > .input { width: 237px; } .rb .fr > .drop { width: 236px; }
.tf .fr > em { width: 11px; } .tf .fr > em:nth-child(2) { width: 12px; }
.tf .fr > .input { width: 64px; margin-right: 5px; letter-spacing: -.1px; } .tf .fr > .input:nth-child(5) { margin-right: 6px; } .tf .fr > .input:last-child { margin-right: 0; }
.fr > .input { margin-bottom: 1px; padding-top: 1px; } .fr > .drop { margin-bottom: 2px; }
.rb .fr > .cb { margin-bottom: 2px; }
.obj svg { margin-left: auto; margin-top: -1px; }
.fold { margin-left: -11px; gap: 3px; }
.material { height: 55px; border-top: 1px solid #171717; background: #303030; display: flex; }
.msw { width: 50px; display: flex; align-items: flex-end; padding: 0 0 6px 7px; gap: 5px; }
.swatch { width: 24px; height: 24px; background: #c9c9c9; margin-bottom: 14px; }
.mr { flex: 1; padding: 4px 5px 0 3px; }
.mt { display: flex; align-items: center; padding-left: 3px; font-size: 13px; height: 18px; color: #8c8c8c; letter-spacing: .12px; }
.mt svg:first-of-type { margin-left: auto; }
.mt svg:last-child { margin: 0 1px 0 9px; color: #b0b0b0; }
.ms { display: flex; align-items: center; margin-top: 6px; color: #646464; }
.ms > span:first-child { width: 51px; letter-spacing: .1px; padding-top: 1px; flex: none; }
.dim { background: #373737; width: 258px; color: #858585; border-color: #333; flex: none; }
.dim .dn { border-top-color: #777; }
.ed { width: 43px; margin-left: 4px; padding: 0 0 1px 5px; letter-spacing: -.1px; }
.thin { height: 12px; border: solid #171717; border-width: 1px 0; background: #2e2e2e; }
.addwrap { padding: 9px 0 0 92px; }
.addbtn { display: block; width: 230px; height: 24px; background: #444; border: 1px solid #222; border-radius: 3px; }
.status { flex: 1; display: flex; justify-content: flex-end; padding: 2px 2px 2px 0; }
.status span { width: 26.500px; border-left: 1px solid #202020; display: grid; place-items: center; }

.taskbar { position: absolute; left: 0; top: 720px; width: 1366px; height: 48px; background: #58522b; display: flex; align-items: center; color: #fff; font: 12px/16px "Open Sans", sans-serif; white-space: nowrap; }
.weather { width: 152px; margin-left: 20px; display: flex; gap: 3px; align-items: center; position: relative; letter-spacing: -.1px; }
.weather > svg { margin-top: -5px; }
.weather em { position: absolute; left: 16px; top: -1px; font-size: 11px; }
.weather div { display: flex; flex-direction: column; padding-top: 2px; }
.soft { color: #d0cdbd; }
.ic { width: 44px; height: 48px; display: grid; place-items: center; position: relative; flex: none; }
.pill { width: 100px; height: 32px; margin: 0 3px 0 4px; border-radius: 16px; background: #665f3c; display: flex; align-items: center; padding: 1px 0 0 23px; gap: 4px; flex: none; font-weight: 600; letter-spacing: -.4px; }
.run::after { content: ""; position: absolute; left: 19px; top: 40px; width: 6px; height: 3px; border-radius: 2px; background: #aaa894; }
.active::before { content: ""; position: absolute; inset: 4px 2px; background: #665f3c; border: 1px solid #6d6644; border-radius: 4px; }
.active::after { width: 16px; left: 14px; background: #c4c382; }
.uapp { width: 22px; height: 22px; background: linear-gradient(135deg, #333, #000); display: grid; place-items: center; position: relative; }
.amz { width: 24px; height: 24px; background: #fff; color: #222d3c; display: flex; flex-direction: column; align-items: center; }
.amz b { font: 700 22px/18px "Open Sans", sans-serif; margin-top: -2px; }
.dos { width: 20px; height: 24px; display: flex; flex-direction: column; color: #e6e6ff; font: 8px/8px "Liberation Mono", monospace; }
.dos b { font-weight: 700; height: 8px; background: #111; align-self: flex-end; padding: 0 1px; }
.dos b:first-child { align-self: flex-start; }
.dos b:nth-child(2) { margin-right: 3px; }
.dos b:last-child { color: #a9a6e6; }
.ava { position: absolute; left: 23px; top: 7px; width: 16px; height: 16px; border-radius: 50%; background: #f8ef9c; display: grid; place-items: center; }
.tray { display: flex; align-items: center; margin-left: 19px; width: 124px; }
.tc { margin-left: 10px; } .tw { margin-left: 12px; } .tv { margin-left: 7px; } .tbt { margin-left: 8px; }
.clock { width: 61px; display: flex; flex-direction: column; align-items: flex-end; margin-left: auto; letter-spacing: -.1px; }
.note { width: 16px; height: 16px; border-radius: 50%; background: #c9c887; color: #222; display: grid; place-items: center; margin: 0 20px 0 11px; font-size: 11px; }
```
